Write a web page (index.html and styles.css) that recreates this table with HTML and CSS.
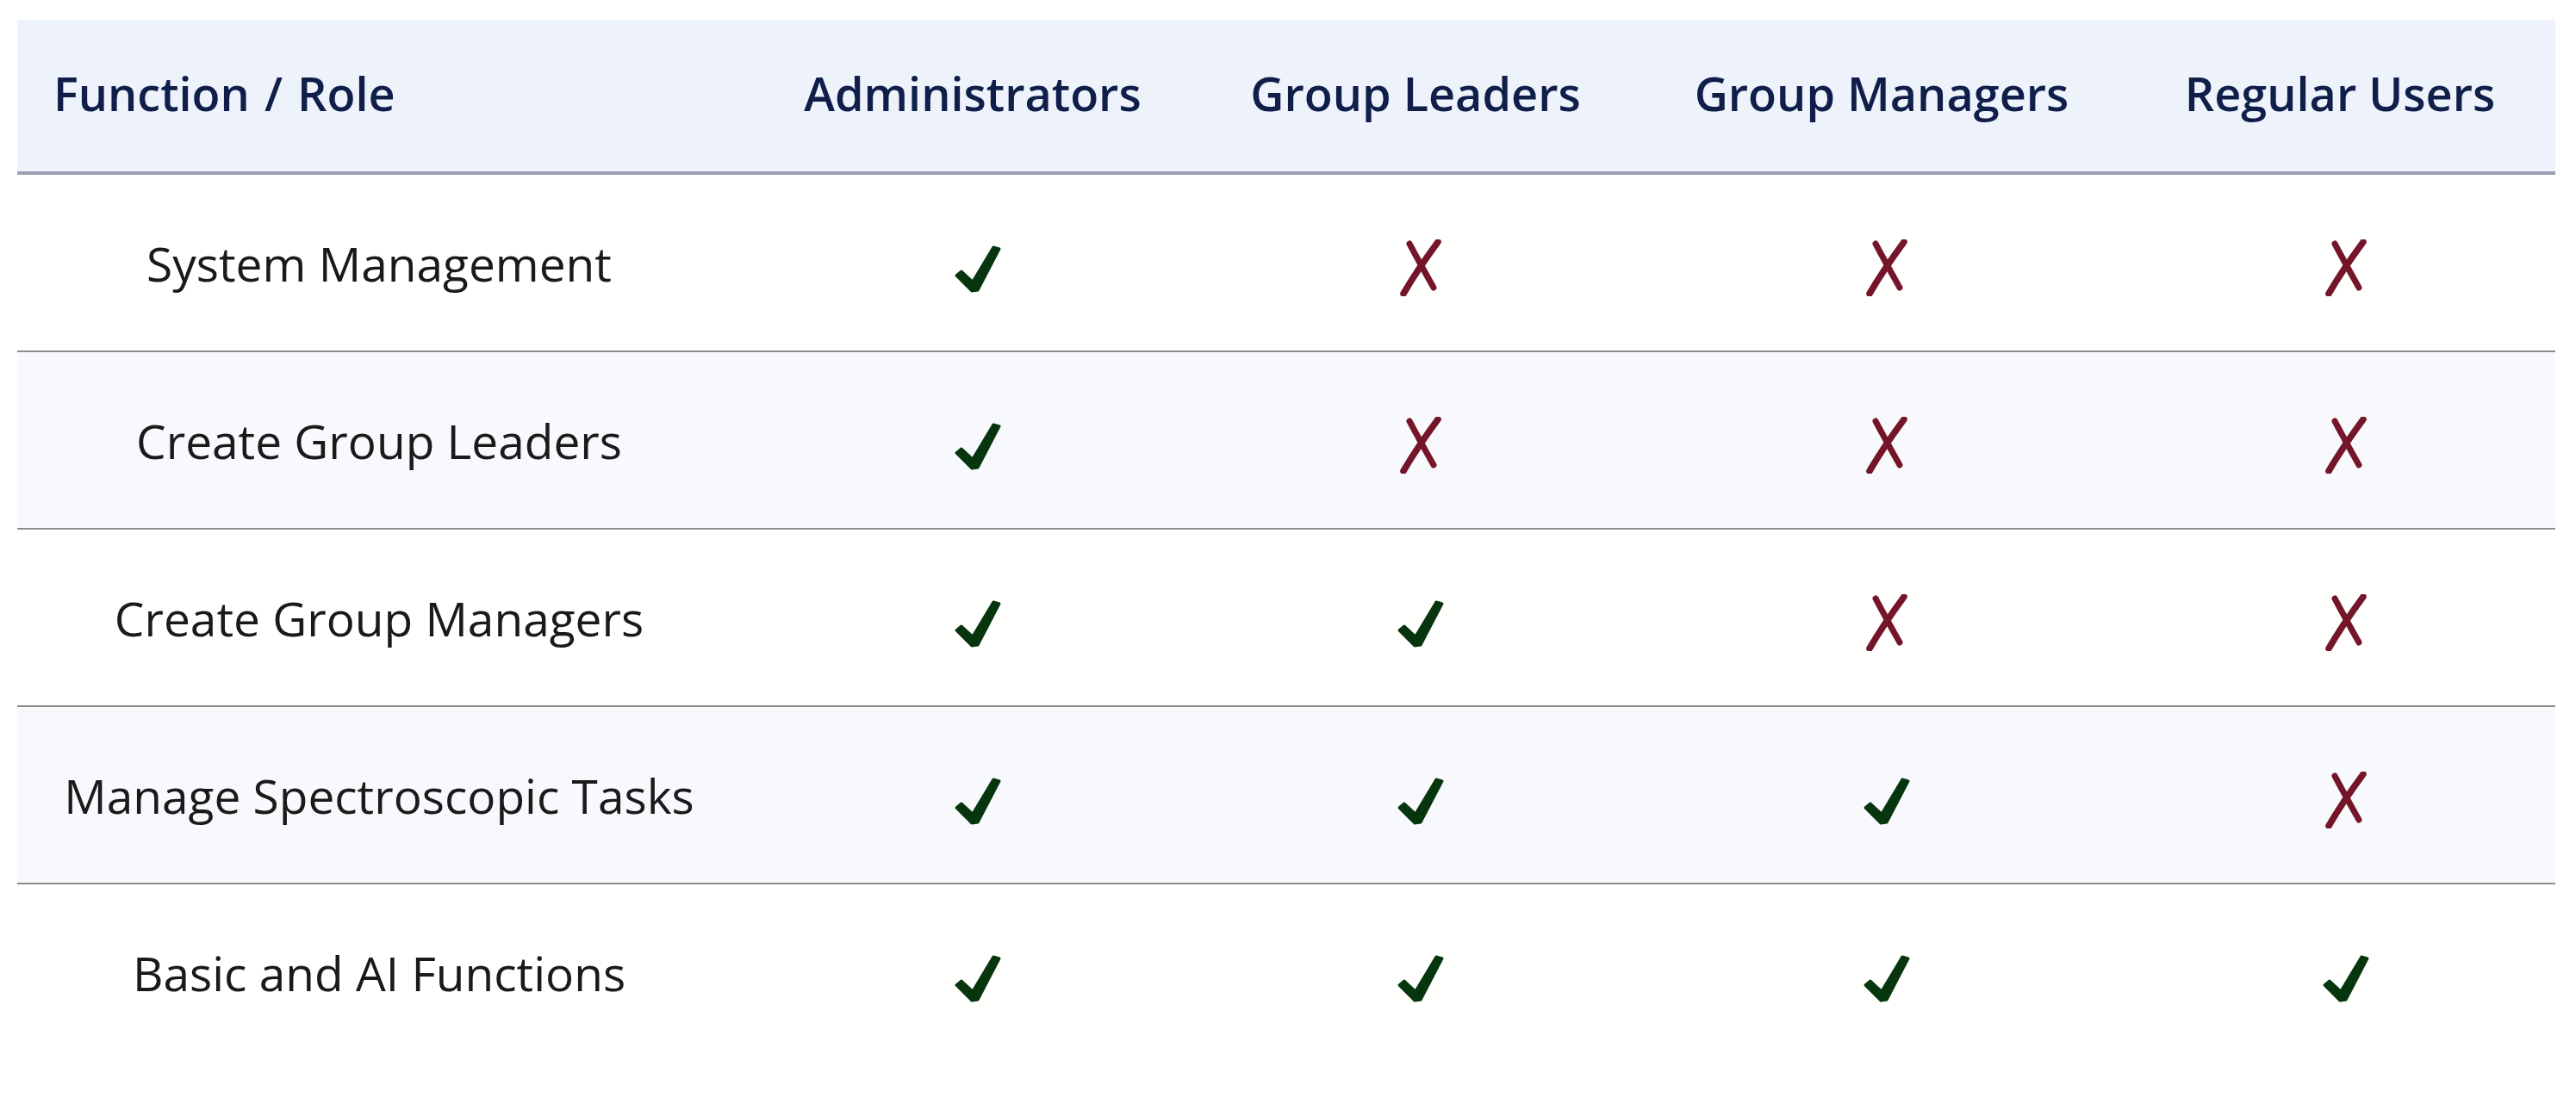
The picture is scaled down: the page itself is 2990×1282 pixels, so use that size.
FILE: index.html
```html
<!DOCTYPE html>
<html lang="en">
<head>
<meta charset="utf-8">
<title>Role Permissions</title>
<link rel="stylesheet" href="styles.css">
</head>
<body>
<svg class="defs" width="0" height="0" aria-hidden="true">
  <symbol id="yes" viewBox="0 0 56 58">
    <path d="M3 37 L9 32 L22 44 L46 4 L53 6 L28 54 L21 55 Z" fill="#07350e" stroke="#07350e" stroke-width="3" stroke-linejoin="round"/>
  </symbol>
  <symbol id="no" viewBox="0 0 48 66">
    <path d="M11 5 C 20 22, 30 40, 39 56" fill="none" stroke="#741529" stroke-width="7" stroke-linecap="round"/>
    <path d="M44 3 C 30 22, 15 44, 4 63" fill="none" stroke="#741529" stroke-width="7.5" stroke-linecap="round"/>
  </symbol>
</svg>
<div class="wrap">
<table class="perm">
  <colgroup>
    <col class="c-fn"><col class="c-admin"><col class="c-gl"><col class="c-gm"><col class="c-ru">
  </colgroup>
  <thead>
    <tr>
      <th class="th-fn">Function / Role</th>
      <th>Administrators</th>
      <th>Group Leaders</th>
      <th>Group Managers</th>
      <th class="th-ru">Regular Users</th>
    </tr>
  </thead>
  <tbody>
    <tr class="odd">
      <td class="fn">System Management</td>
      <td class="mk"><svg class="ic-yes"><use href="#yes"/></svg></td>
      <td class="mk"><svg class="ic-no"><use href="#no"/></svg></td>
      <td class="mk"><svg class="ic-no"><use href="#no"/></svg></td>
      <td class="mk-last"><svg class="ic-no"><use href="#no"/></svg></td>
    </tr>
    <tr class="even">
      <td class="fn">Create Group Leaders</td>
      <td class="mk"><svg class="ic-yes"><use href="#yes"/></svg></td>
      <td class="mk"><svg class="ic-no"><use href="#no"/></svg></td>
      <td class="mk"><svg class="ic-no"><use href="#no"/></svg></td>
      <td class="mk-last"><svg class="ic-no"><use href="#no"/></svg></td>
    </tr>
    <tr class="odd">
      <td class="fn">Create Group Managers</td>
      <td class="mk"><svg class="ic-yes"><use href="#yes"/></svg></td>
      <td class="mk"><svg class="ic-yes"><use href="#yes"/></svg></td>
      <td class="mk"><svg class="ic-no"><use href="#no"/></svg></td>
      <td class="mk-last"><svg class="ic-no"><use href="#no"/></svg></td>
    </tr>
    <tr class="even">
      <td class="fn">Manage Spectroscopic Tasks</td>
      <td class="mk"><svg class="ic-yes"><use href="#yes"/></svg></td>
      <td class="mk"><svg class="ic-yes"><use href="#yes"/></svg></td>
      <td class="mk"><svg class="ic-yes"><use href="#yes"/></svg></td>
      <td class="mk-last"><svg class="ic-no"><use href="#no"/></svg></td>
    </tr>
    <tr class="odd last">
      <td class="fn">Basic and AI Functions</td>
      <td class="mk"><svg class="ic-yes"><use href="#yes"/></svg></td>
      <td class="mk"><svg class="ic-yes"><use href="#yes"/></svg></td>
      <td class="mk"><svg class="ic-yes"><use href="#yes"/></svg></td>
      <td class="mk-last"><svg class="ic-yes"><use href="#yes"/></svg></td>
    </tr>
  </tbody>
</table>
</div>
</body>
</html>
```

FILE: styles.css
```css
html, body {
  margin: 0;
  padding: 0;
  background: #ffffff;
}

.defs {
  display: block;
  width: 0;
  height: 0;
  overflow: hidden;
}

.wrap {
  padding: 23px 24px 0 20px;
}

.perm {
  width: 2946px;
  border-collapse: collapse;
  table-layout: fixed;
  font-family: "Open Sans", "Noto Sans", "Liberation Sans", sans-serif;
}

.c-fn { width: 840px; }
.c-admin { width: 538px; }
.c-gl { width: 490px; }
.c-gm { width: 592px; }
.c-ru { width: 486px; }

.perm thead tr {
  background: #eef2fb;
  border-bottom: 4px solid #9aa1b2;
}

.perm th {
  height: 170px;
  padding: 0 0 6px 0;
  font-size: 54px;
  font-weight: 600;
  color: #101e4a;
  text-align: center;
  vertical-align: middle;
}

.perm th.th-fn {
  text-align: left;
  padding-left: 42px;
  word-spacing: 3px;
}

.perm th.th-ru {
  padding-right: 14px;
}

.perm td {
  height: 204px;
  padding: 0;
  text-align: center;
  vertical-align: middle;
  font-size: 55px;
  font-weight: 400;
  color: #1a1a1a;
}

.perm td.mk {
  padding-left: 12px;
}

.perm tbody tr {
  border-bottom: 2px solid #8c8c8c;
}

.perm tbody tr.last {
  border-bottom: 0;
}

.perm tr.odd { background: #fffffd; }
.perm tr.even { background: #f8f9fc; }

.ic-yes {
  width: 56px;
  height: 58px;
  display: inline-block;
  vertical-align: middle;
}

.ic-no {
  width: 48px;
  height: 66px;
  display: inline-block;
  vertical-align: middle;
}
```
